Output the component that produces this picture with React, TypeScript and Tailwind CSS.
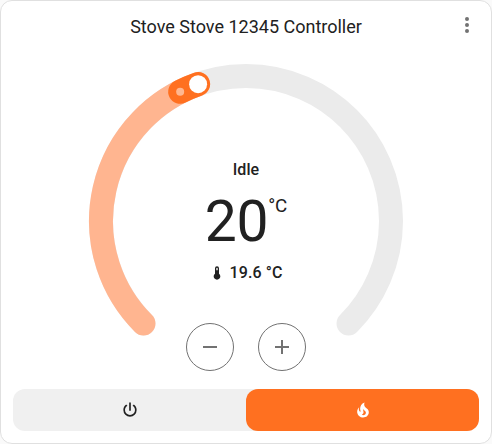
import React from "react";

const ICONS = {
  dots: "M12,16A2,2 0 0,1 14,18A2,2 0 0,1 12,20A2,2 0 0,1 10,18A2,2 0 0,1 12,16M12,10A2,2 0 0,1 14,12A2,2 0 0,1 12,14A2,2 0 0,1 10,12A2,2 0 0,1 12,10M12,4A2,2 0 0,1 14,6A2,2 0 0,1 12,8A2,2 0 0,1 10,6A2,2 0 0,1 12,4Z",
  thermometer:
    "M15 13V5A3 3 0 0 0 9 5V13A5 5 0 1 0 15 13M12 4A1 1 0 0 1 13 5V8H11V5A1 1 0 0 1 12 4Z",
  minus: "M19,13H5V11H19V13Z",
  plus: "M19,13H13V19H11V13H5V11H11V5H13V11H19V13Z",
  power:
    "M16.56,5.44L15.11,6.89C16.84,7.94 18,9.83 18,12A6,6 0 0,1 12,18A6,6 0 0,1 6,12C6,9.83 7.16,7.94 8.88,6.88L7.44,5.44C5.36,6.88 4,9.28 4,12A8,8 0 0,0 12,20A8,8 0 0,0 20,12C20,9.28 18.64,6.88 16.56,5.44M13,3H11V13H13",
  fire: "M17.66 11.2C17.43 10.9 17.15 10.64 16.89 10.38C16.22 9.78 15.46 9.35 14.82 8.72C13.33 7.26 13 4.85 13.95 3C13 3.23 12.17 3.75 11.46 4.32C8.87 6.4 7.85 10.07 9.07 13.22C9.11 13.32 9.15 13.42 9.15 13.55C9.15 13.77 9 13.97 8.8 14.05C8.57 14.15 8.33 14.09 8.14 13.93C8.08 13.88 8.04 13.83 8 13.76C6.87 12.33 6.69 10.28 7.45 8.64C5.78 10 4.87 12.3 5 14.47C5.06 14.97 5.12 15.47 5.29 15.97C5.43 16.57 5.7 17.17 6 17.7C7.08 19.43 8.95 20.67 10.96 20.92C13.1 21.19 15.39 20.8 17.03 19.32C18.86 17.66 19.5 15 18.56 12.72L18.43 12.46C18.22 12 17.66 11.2 17.66 11.2M14.5 17.5C14.22 17.74 13.76 18 13.4 18.1C12.28 18.5 11.16 17.94 10.5 17.28C11.69 17 12.4 16.12 12.61 15.23C12.78 14.43 12.46 13.77 12.33 13C12.21 12.26 12.23 11.63 12.5 10.94C12.69 11.32 12.89 11.7 13.13 12C13.9 13 15.11 13.44 15.37 14.8C15.41 14.94 15.43 15.08 15.43 15.23C15.46 16.05 15.1 16.95 14.5 17.5H14.5Z",
};

function Icon({ name, className }: { name: keyof typeof ICONS; className: string }) {
  return (
    <svg viewBox="0 0 24 24" fill="currentColor" className={className} aria-hidden="true">
      <path d={ICONS[name]} />
    </svg>
  );
}

const RADIUS = 145;

// Degrees are measured clockwise from the top of the dial.
function point(deg: number) {
  const a = (deg * Math.PI) / 180;
  return { x: RADIUS * Math.sin(a), y: -RADIUS * Math.cos(a) };
}

function arc(from: number, to: number) {
  const s = point(from);
  const e = point(to);
  const large = to - from > 180 ? 1 : 0;
  return `M ${s.x} ${s.y} A ${RADIUS} ${RADIUS} 0 ${large} 1 ${e.x} ${e.y}`;
}

const CURRENT = -27;
const TARGET = -19.29;

function Dial() {
  const current = point(CURRENT);
  const target = point(TARGET);
  return (
    <svg
      viewBox="-160 -160 320 320"
      className="col-start-1 row-start-1 size-80"
      fill="none"
      strokeLinecap="round"
      strokeWidth={24}
    >
      <path d={arc(-135, 135)} stroke="#ebebeb" />
      <path d={arc(-135, TARGET)} stroke="#ffb590" />
      <path d={arc(CURRENT, TARGET)} stroke="#ff7020" />
      <circle cx={current.x} cy={current.y} r={4} fill="#ffb790" />
      <circle cx={target.x} cy={target.y} r={9} fill="#fff" />
    </svg>
  );
}

function StepButton({ icon, label }: { icon: "minus" | "plus"; label: string }) {
  return (
    <button
      aria-label={label}
      className="flex size-12 items-center justify-center rounded-full border border-[#727272] text-[#727272]"
    >
      <Icon name={icon} className="size-6" />
    </button>
  );
}

export default function App() {
  return (
    <div className="h-[444px] w-[492px] bg-[#fafafa] font-['Roboto',sans-serif] text-[#212121]">
      <div className="flex h-full flex-col rounded-xl border border-[#e0e0e0] bg-white">
        <header className="grid h-[50px] grid-cols-[48px_1fr_48px] items-start">
          <h1 className="col-start-2 pt-2 text-center text-[18px] leading-9">
            Stove Stove 12345 Controller
          </h1>
          <button aria-label="More" className="flex size-12 items-center justify-center text-[#727272]">
            <Icon name="dots" className="size-6" />
          </button>
        </header>

        <main className="mt-[10px] grid h-80 justify-center">
          <Dial />
          <div className="col-start-1 row-start-1 flex flex-col items-center">
            <p className="mt-[97px] text-base leading-6 font-medium tracking-[0.1px]">Idle</p>
            <div className="mt-[12px] flex h-[56px] items-start">
              <span className="text-[57px] leading-[56px] tracking-[-0.25px]">20</span>
              <span className="w-[19px] text-[18.8px] leading-6 tracking-[-0.25px]">°C</span>
            </div>
            <p className="mt-[11px] flex items-center text-base leading-6 font-medium tracking-[0.1px]">
              <Icon name="thermometer" className="mr-[5px] -ml-px size-4" />
              19.6 °C
            </p>
            <div className="mt-[38px] flex gap-6">
              <StepButton icon="minus" label="Decrease temperature" />
              <StepButton icon="plus" label="Increase temperature" />
            </div>
          </div>
        </main>

        <div className="mx-3 mt-2 flex h-[42px] rounded-xl bg-[#f0f0f0]">
          <button aria-label="Off" className="flex flex-1 items-center justify-center">
            <Icon name="power" className="size-5" />
          </button>
          <button
            aria-label="Heat"
            className="flex flex-1 items-center justify-center rounded-xl bg-[#ff7020] text-white"
          >
            <Icon name="fire" className="size-5" />
          </button>
        </div>
      </div>
    </div>
  );
}
